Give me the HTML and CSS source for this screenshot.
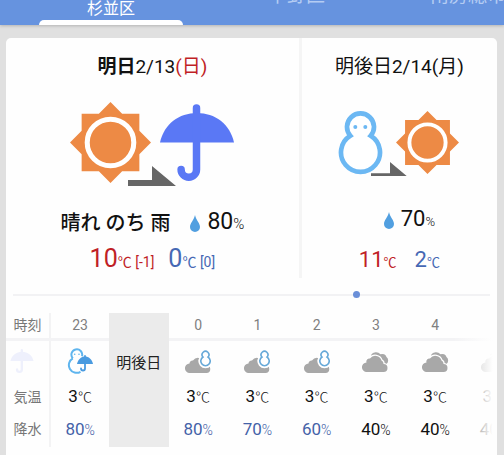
FILE: index.html
```html
<!DOCTYPE html>
<html lang="ja">
<head>
    <meta charset="UTF-8">
    <meta name="viewport" content="width=device-width, initial-scale=1.0">
    <title>杉並区の天気</title>
    <link rel="stylesheet" href="styles.css">
</head>
<body>

    <svg class="symbols" aria-hidden="true">
        <symbol id="sun" viewBox="0 0 80 80">
            <path fill="#ed8a45" d="M40 0L51.5 11.5H68.5V28.5L80 40L68.5 51.5V68.5H51.5L40 80L28.5 68.5H11.5V51.5L0 40L11.5 28.5V11.5H28.5Z"/>
            <circle cx="40" cy="40" r="23" fill="none" stroke="#fff" stroke-width="5"/>
        </symbol>
        <symbol id="umbrella" viewBox="0 0 74 77">
            <path fill="currentColor" d="M0 38.5C4 20 19 9 37 9S70 20 74 38.5Z"/>
            <path fill="none" stroke="currentColor" stroke-width="7.5" stroke-linecap="round" d="M36.5 4V65.5a7.7 7.7 0 0 1-15.4 0"/>
        </symbol>
        <symbol id="snowman" viewBox="0 0 45 64">
            <path fill="#fff" stroke="#6cb8f3" stroke-width="4.7" d="M12.3 24.8A13.5 13.5 0 1 1 32.7 24.8A19.5 19.5 0 1 1 12.3 24.8Z"/>
            <circle cx="17.3" cy="16" r="2" fill="#6cb8f3"/>
            <circle cx="27.3" cy="16" r="2" fill="#6cb8f3"/>
        </symbol>
        <symbol id="arrow" viewBox="0 0 48 20">
            <path fill="#666" d="M0 14H24V0L48 20H0Z"/>
        </symbol>
        <symbol id="drop" viewBox="0 0 10 17">
            <path fill="#519fe0" d="M5 0C6 5 10 8 10 12A5 5 0 0 1 0 12C0 8 4 5 5 0Z"/>
        </symbol>
        <symbol id="cloud" viewBox="0 0 26 16">
            <path fill="#a8a8a8" d="M5 16A4.8 4.8 0 0 1 4.5 6.4A3 3 0 0 1 8 3.5A6 6 0 0 1 18.5 4.5A4 4 0 0 1 21 8A4 4 0 0 1 21.5 16Z"/>
        </symbol>
        <symbol id="cloud-snow" viewBox="0 0 26 23">
            <use href="#cloud" y="7" width="26" height="16"/>
            <path fill="#fff" stroke="#fff" stroke-width="5" d="M18 7A3.4 3.4 0 1 1 23 7A4.7 4.7 0 1 1 18 7Z"/>
            <path fill="#fff" stroke="#67a9d8" stroke-width="1.6" d="M18 7A3.4 3.4 0 1 1 23 7A4.7 4.7 0 1 1 18 7Z"/>
        </symbol>
        <symbol id="clouds" viewBox="0 0 27 21">
            <path fill="#a8a8a8" d="M9 4A6 6 0 0 1 18.5 3.3A4.5 4.5 0 0 1 24.5 6A4.5 4.5 0 0 1 24.5 13L21 15L9 8Z"/>
            <path fill="#a8a8a8" stroke="#fff" stroke-width="2.6" paint-order="stroke" d="M5 21A4.8 4.8 0 0 1 4.5 11.4A3 3 0 0 1 8 7.5A6.5 6.5 0 0 1 19.5 9.5A3.5 3.5 0 0 1 21.5 13A4 4 0 0 1 21.5 21Z"/>
        </symbol>
        <symbol id="snow-rain" viewBox="0 0 26 26">
            <path fill="none" stroke="#5fb5ee" stroke-width="2" d="M5.8 10.3A5.4 5.4 0 1 1 15 8.2M5.8 10.3A7.7 7.7 0 1 0 13.5 23.8"/>
            <circle cx="7.7" cy="6.3" r="0.8" fill="#5fb5ee"/>
            <circle cx="12" cy="6.3" r="0.8" fill="#5fb5ee"/>
            <path fill="#4a9be0" d="M10 16C11 11 14.5 8.5 18 8.5S25 11 26 16Z"/>
            <path fill="none" stroke="#4a9be0" stroke-width="1.8" stroke-linecap="round" d="M18 8V20.5a2 2 0 0 1-4 0"/>
        </symbol>
    </svg>

    <header class="header">
        <nav class="tabs">
            <a class="tab tab-active" href="#">杉並区</a>
            <a class="tab" href="#">中野区</a>
            <a class="tab" href="#">南房総市</a>
        </nav>
    </header>

    <main class="card">
        <section class="days">
            <article class="day day-main">
                <h2 class="day-title"><b>明日</b>2/13<span class="sunday">(日)</span></h2>
                <svg class="day-icon" width="164" height="85" role="img" aria-label="晴れ のち 雨">
                    <use href="#sun" width="81" height="81"/>
                    <use href="#umbrella" class="rain-color" x="90" y="2" width="74" height="77"/>
                    <use href="#arrow" x="58" y="64" width="48" height="20"/>
                </svg>
                <div class="summary">
                    <span class="weather">晴れ のち 雨</span>
                    <svg class="drop" width="10" height="17"><use href="#drop"/></svg>
                    <span class="chance">80<small>%</small></span>
                </div>
                <div class="temps">
                    <span class="high">10<small>℃ [-1]</small></span>
                    <span class="low">0<small>℃ [0]</small></span>
                </div>
            </article>
            <article class="day day-next">
                <h2 class="day-title">明後日2/14(月)</h2>
                <svg class="day-icon" width="122" height="68" role="img" aria-label="雪 のち 晴れ">
                    <use href="#snowman" width="45" height="64"/>
                    <use href="#sun" x="58" width="63" height="63"/>
                    <use href="#arrow" x="33" y="51" width="38" height="16"/>
                </svg>
                <div class="summary">
                    <svg class="drop" width="10" height="17"><use href="#drop"/></svg>
                    <span class="chance">70<small>%</small></span>
                </div>
                <div class="temps">
                    <span class="high">11<small>℃</small></span>
                    <span class="low">2<small>℃</small></span>
                </div>
            </article>
        </section>

        <div class="timeline"><span class="timeline-dot"></span></div>

        <div class="hourly">
            <table class="hours">
                <colgroup>
                    <col class="col-label">
                    <col span="8">
                </colgroup>
                <tr class="row-time">
                    <th scope="row">時刻</th>
                    <td>23</td>
                    <td class="day-break" rowspan="4">明後日</td>
                    <td>0</td>
                    <td>1</td>
                    <td>2</td>
                    <td>3</td>
                    <td>4</td>
                    <td></td>
                </tr>
                <tr class="row-icon">
                    <th><svg class="passed" width="24" height="24"><use href="#umbrella"/></svg></th>
                    <td><svg width="26" height="26"><use href="#snow-rain"/></svg></td>
                    <td><svg width="26" height="23"><use href="#cloud-snow"/></svg></td>
                    <td><svg width="26" height="23"><use href="#cloud-snow"/></svg></td>
                    <td><svg width="26" height="23"><use href="#cloud-snow"/></svg></td>
                    <td><svg width="27" height="21"><use href="#clouds"/></svg></td>
                    <td><svg width="27" height="21"><use href="#clouds"/></svg></td>
                    <td><svg width="27" height="21"><use href="#clouds"/></svg></td>
                </tr>
                <tr class="row-temp">
                    <th scope="row">気温</th>
                    <td>3<small>℃</small></td>
                    <td>3<small>℃</small></td>
                    <td>3<small>℃</small></td>
                    <td>3<small>℃</small></td>
                    <td>3<small>℃</small></td>
                    <td>3<small>℃</small></td>
                    <td>3<small>℃</small></td>
                </tr>
                <tr class="row-rain">
                    <th scope="row">降水</th>
                    <td class="wet">80<small>%</small></td>
                    <td class="wet">80<small>%</small></td>
                    <td class="wet">70<small>%</small></td>
                    <td class="wet">60<small>%</small></td>
                    <td>40<small>%</small></td>
                    <td>40<small>%</small></td>
                    <td>40<small>%</small></td>
                </tr>
            </table>
        </div>
    </main>

</body>
</html>
```
FILE: styles.css
```css
body {
    font-family: Roboto, "Noto Sans CJK JP", sans-serif;
    background-color: #e0e0e0;
    color: #111;
    margin: 0;
    min-height: 100vh;
    display: flex;
    flex-direction: column;
}

.symbols {
    position: absolute;
    width: 0;
    height: 0;
}

.header {
    background-color: #6693df;
    height: 25px;
    overflow: hidden;
    box-shadow: 0 1px 3px rgba(0, 0, 0, 0.2);
}

.tabs {
    display: flex;
    gap: 65px;
    padding-left: 39px;
}

.tab {
    flex: none;
    margin-top: -16px;
    padding: 0 20px;
    font-size: 19px;
    line-height: 24px;
    color: #b4ccf3;
    text-decoration: none;
}

.tab-active {
    margin-top: 0;
    padding: 0 48px;
    font-size: 16px;
    line-height: 18px;
    color: #fff;
}

.tab-active::after {
    content: "";
    display: block;
    height: 5px;
    margin: 2px -48px 0;
    border-radius: 5px 5px 0 0;
    background-color: #fff;
}

.card {
    flex: 1;
    margin: 13px 7px 0 6px;
    border-radius: 5px 5px 0 0;
    background-color: #fefefe;
    overflow: hidden;
}

.days {
    display: flex;
    height: 240px;
}

.day {
    display: flex;
    flex-direction: column;
    align-items: center;
    padding-top: 17px;
}

.day-main {
    flex: 3;
    border-right: 3px solid #f5f5f5;
}

.day-next {
    flex: 2;
}

.day-title {
    margin: 0;
    font-size: 19px;
    line-height: 24px;
    font-weight: 400;
}

.day-title b {
    font-weight: 700;
}

.sunday,
.high {
    color: #c01f26;
}

.low {
    color: #4668b4;
}

.day-icon {
    margin-top: 23px;
}

.day-next .day-icon {
    margin-top: 32px;
}

.rain-color {
    color: #5a78f5;
}

.summary {
    display: flex;
    align-items: center;
    margin-top: 20px;
    line-height: 30px;
}

.day-next .summary {
    margin-top: 28px;
    padding-left: 20px;
}

.weather {
    margin-right: 20px;
    font-size: 20px;
    font-weight: 500;
}

.drop {
    margin-right: 7px;
}

.chance {
    font-size: 23px;
}

.chance small {
    font-size: 15px;
}

small {
    font-weight: 300;
}

.temps {
    display: flex;
    gap: 14px;
    margin-top: 5px;
    font-size: 25px;
    line-height: 30px;
}

.temps small {
    font-size: 14px;
    font-weight: 400;
}

.day-next .chance,
.day-next .temps {
    font-size: 22px;
}

.day-next .temps {
    gap: 18px;
    margin-top: 8px;
}

.day-next small {
    font-size: 13px;
}

.timeline {
    position: relative;
    height: 2px;
    margin: 16px 7px 0;
    background-color: #f2f2f4;
}

.timeline-dot {
    position: absolute;
    top: -3px;
    left: 72%;
    width: 7px;
    height: 7px;
    margin-left: -3px;
    border-radius: 50%;
    background-color: #6a8fd8;
}

.hourly {
    position: relative;
    margin-top: 17px;
    overflow: hidden;
}

/* fades out the hours that run off the right side */
.hourly::after {
    content: "";
    position: absolute;
    top: 0;
    right: 0;
    width: 44px;
    height: 100%;
    background: linear-gradient(to right, rgba(254, 254, 254, 0), rgba(254, 254, 254, 0.7) 60%, #fefefe 90%);
}

.hours {
    width: 518px;
    table-layout: fixed;
    border-collapse: collapse;
    text-align: center;
}

.col-label {
    width: 44px;
}

.hours th,
.hours td {
    padding: 0;
    font-size: 17px;
    font-weight: 400;
    line-height: 20px;
}

.hours th {
    border-right: 2px solid #f3f3f4;
    font-size: 14px;
    color: #777;
}

.hours small {
    font-size: 14px;
}

.hours svg {
    display: block;
    margin: 0 auto;
}

.row-time {
    height: 26px;
}

.row-time th,
.row-time td {
    border-bottom: 3px solid #f3f3f5;
}

.row-time td {
    font-size: 14px;
    color: #808080;
}

.row-icon {
    height: 43px;
}

.row-temp {
    height: 29px;
}

.row-rain {
    height: 36px;
}

.row-time .day-break {
    padding-top: 40px;
    border-bottom: none;
    background-color: #ebebeb;
    font-size: 15px;
    color: #222;
    vertical-align: top;
}

.hours .passed {
    margin-left: 4px;
    color: #eef0fc;
}

.hours .wet {
    color: #4462a8;
}
```
